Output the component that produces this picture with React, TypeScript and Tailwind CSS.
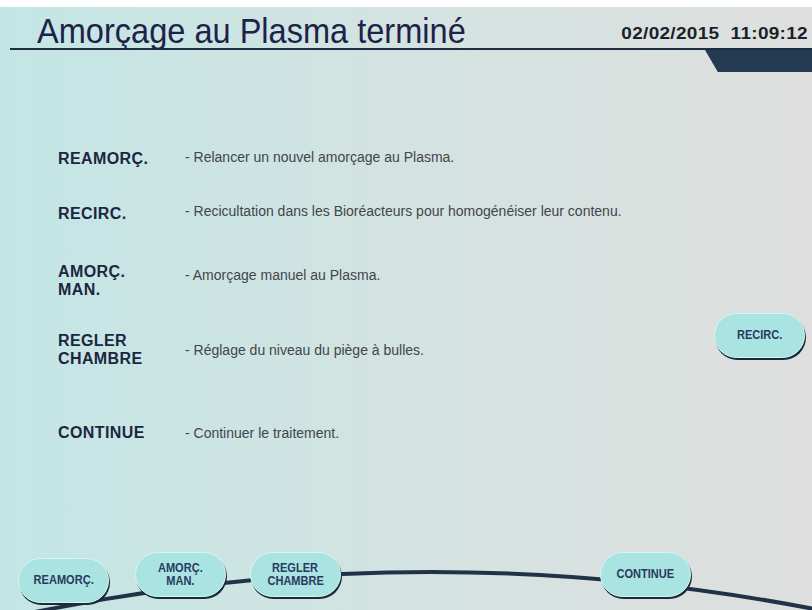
import React from 'react';

const ROWS = [
  { label: ['REAMORÇ.'], desc: '- Relancer un nouvel amorçage au Plasma.', mt: 'mt-[76px]', descPad: 'pb-[3px]' },
  { label: ['RECIRC.'], desc: '- Recicultation dans les Bioréacteurs pour homogénéiser leur contenu.', mt: 'mt-[33px]', descPad: 'pb-[5px]' },
  { label: ['AMORÇ.', 'MAN.'], desc: '- Amorçage manuel au Plasma.', mt: 'mt-[38px]', descPad: 'pb-[12px]' },
  { label: ['REGLER', 'CHAMBRE'], desc: '- Réglage du niveau du piège à bulles.', mt: 'mt-[33px]', descPad: '' },
  { label: ['CONTINUE'], desc: '- Continuer le traitement.', mt: 'mt-[56px]', descPad: '' },
];

function PillButton({ lines, className = '' }: { lines: string[]; className?: string }) {
  return (
    <button
      className={
        'w-[91px] h-[45px] rounded-[23px] bg-[#a9e4e3] border border-[#d4f6f5] shadow-[1px_2px_0_#1d2a3a] flex flex-col items-center justify-center font-bold text-[12px] leading-[13px] text-[#2a3a5c] ' +
        className
      }
    >
      {lines.map((l) => (
        <span key={l} className="scale-x-[0.92]">
          {l}
        </span>
      ))}
    </button>
  );
}

export default function App() {
  return (
    <div className="relative w-[812px] h-[610px] overflow-hidden flex flex-col bg-gradient-to-r from-[#c3e6e5] via-[#d3e3e1] to-[#dedfde] font-['Liberation_Sans',sans-serif]">
      <div className="h-[7px] bg-white shrink-0" />

      {/* header */}
      <div className="flex items-end justify-between h-[38px] pl-[37px] pr-[4px] shrink-0">
        <h1 className="text-[35px] leading-none text-[#1d2348] scale-x-[0.93] origin-left -mb-[3px] whitespace-nowrap">
          Amorçage au Plasma terminé
        </h1>
        <div className="font-bold text-[19px] leading-none tracking-[0.3px] text-[#1b1f2a] pb-[3px] whitespace-pre scale-y-[0.9]">
          02/02/2015  11:09:12
        </div>
      </div>
      <div className="ml-[10px] h-[2px] bg-[#1f2d40] shrink-0 mt-[3px]" />
      <div className="flex justify-end shrink-0">
        <div className="w-[107px] h-[22px] bg-[#243a52] [clip-path:polygon(0_0,100%_0,100%_100%,12%_100%)]" />
      </div>

      {/* body */}
      <div className="flex flex-1">
        <div className="flex flex-col pl-[58px] flex-1">
          {ROWS.map((r) => (
            <div key={r.desc} className={'flex items-center ' + r.mt}>
              <div className="w-[127px] font-bold text-[16px] leading-[18px] tracking-[0.4px] text-[#1c2541]">
                {r.label.map((l) => (
                  <div key={l}>{l}</div>
                ))}
              </div>
              <div className={'text-[14px] leading-[18px] text-[#42454b] ' + r.descPad}>{r.desc}</div>
            </div>
          ))}
        </div>
        <div className="pt-[241px] pr-[7px]">
          <PillButton lines={['RECIRC.']} />
        </div>
      </div>

      {/* bottom curve */}
      <svg className="absolute inset-0 pointer-events-none" width="812" height="610" viewBox="0 0 812 610">
        <path d="M30 613 Q420 533 814 609" fill="none" stroke="#203247" strokeWidth="4" />
      </svg>

      <div className="relative flex items-start h-[58px] pl-[18px] shrink-0">
        <PillButton lines={['REAMORÇ.']} className="mt-[6px]" />
        <PillButton lines={['AMORÇ.', 'MAN.']} className="ml-[26px]" />
        <PillButton lines={['REGLER', 'CHAMBRE']} className="ml-[24px]" />
        <PillButton lines={['CONTINUE']} className="ml-[259px]" />
      </div>
    </div>
  );
}
